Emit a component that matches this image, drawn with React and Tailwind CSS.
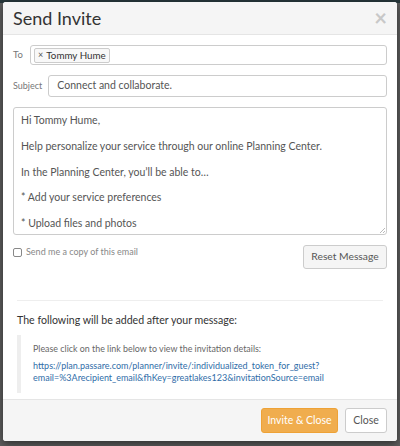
import React from "react";

export default function App() {
  const font = { fontFamily: "Lato, 'Open Sans', sans-serif" };
  return (
    <div className="w-[400px] h-[446px] bg-[#5e5e5e] overflow-hidden relative" style={font}>
      <div className="h-[3px] bg-[#26363a]" />
      {/* Modal */}
      <div className="absolute left-[3px] top-[2px] w-[394px] h-[439px] bg-white rounded-[3px] shadow-[0_3px_9px_rgba(0,0,0,0.5)] flex flex-col overflow-hidden">
        {/* Header */}
        <div className="h-[33px] bg-[#f5f5f5] border-b border-[#e5e5e5] flex items-center justify-between pl-[10px] pr-[10px] shrink-0">
          <h4 className="text-[18px] text-[#333] leading-none">Send Invite</h4>
          <span className="text-[#c8c8c8] text-[22px] font-bold leading-none">×</span>
        </div>

        {/* Body */}
        <div className="flex-1 px-[10px] pt-[10px]">
          <div className="flex items-center gap-[6px]">
            <label className="text-[9.5px] text-[#777] w-[11px]">To</label>
            <div className="flex-1 h-[20px] border border-[#ccc] rounded-[3px] flex items-center px-[3px]">
              <span className="h-[15px] border border-[#ccc] rounded-[2px] bg-[#f8f8f8] flex items-center px-[3px] text-[9.8px] text-[#333] gap-[3px]">
                <span className="text-[9px] text-[#555]">×</span>Tommy Hume
              </span>
            </div>
          </div>

          <div className="flex items-center gap-[6px] mt-[10px]">
            <label className="text-[9px] text-[#777]">Subject</label>
            <div className="flex-1 h-[22px] border border-[#ccc] rounded-[3px] flex items-center px-[8px] text-[10.5px] text-[#555]">
              Connect and collaborate.
            </div>
          </div>

          <div className="mt-[10px] h-[128px] border border-[#ccc] rounded-[3px] px-[7px] pt-[6px] text-[10.5px] leading-[12.9px] text-[#555] relative">
            <p>Hi Tommy Hume,</p>
            <p className="h-[12.9px]" />
            <p>Help personalize your service through our online Planning Center.</p>
            <p className="h-[12.9px]" />
            <p>In the Planning Center, you’ll be able to…</p>
            <p className="h-[12.9px]" />
            <p>* Add your service preferences</p>
            <p className="h-[12.9px]" />
            <p>* Upload files and photos</p>
            <svg className="absolute right-[1px] bottom-[1px]" width="6" height="6" viewBox="0 0 6 6">
              <path d="M6 1 L1 6 M6 4 L4 6" stroke="#aaa" strokeWidth="0.8" />
            </svg>
          </div>

          <div className="flex justify-between items-start mt-[10px]">
            <label className="flex items-center gap-[4px] text-[9px] text-[#888]">
              <span className="w-[9px] h-[9px] border border-[#888] rounded-[2px] bg-white mt-[2px]" />
              Send me a copy of this email
            </label>
            <button className="h-[24px] w-[84px] bg-[#f5f5f5] border border-[#ccc] rounded-[3px] text-[10.3px] text-[#555]">
              Reset Message
            </button>
          </div>

          <div className="mx-[4px] mt-[31px] border-t border-[#eee]" />

          <p className="mx-[4px] mt-[12px] text-[10.6px] text-[#333]">The following will be added after your message:</p>

          <div className="mx-[4px] mt-[6px] border-l-[4px] border-[#eee] pl-[12px] pt-[7px] pb-[9px]">
            <p className="text-[8.9px] text-[#666]">Please click on the link below to view the invitation details:</p>
            <p className="mt-[5px] text-[9px] leading-[12px] text-[#2f6da8] break-all">
              https://plan.passare.com/planner/invite/:individualized_token_for_guest?<br />
              email=%3Arecipient_email&amp;fhKey=greatlakes123&amp;invitationSource=email
            </p>
          </div>
        </div>

        {/* Footer */}
        <div className="h-[42px] bg-[#f5f5f5] border-t border-[#e5e5e5] flex items-center justify-end gap-[7px] pr-[10px] shrink-0">
          <button className="h-[25px] w-[77px] bg-[#f0ad4e] border border-[#eea236] rounded-[3px] text-white text-[10.5px]">
            Invite &amp; Close
          </button>
          <button className="h-[25px] w-[42px] bg-white border border-[#ccc] rounded-[3px] text-[#555] text-[10.5px]">
            Close
          </button>
        </div>
      </div>
    </div>
  );
}
